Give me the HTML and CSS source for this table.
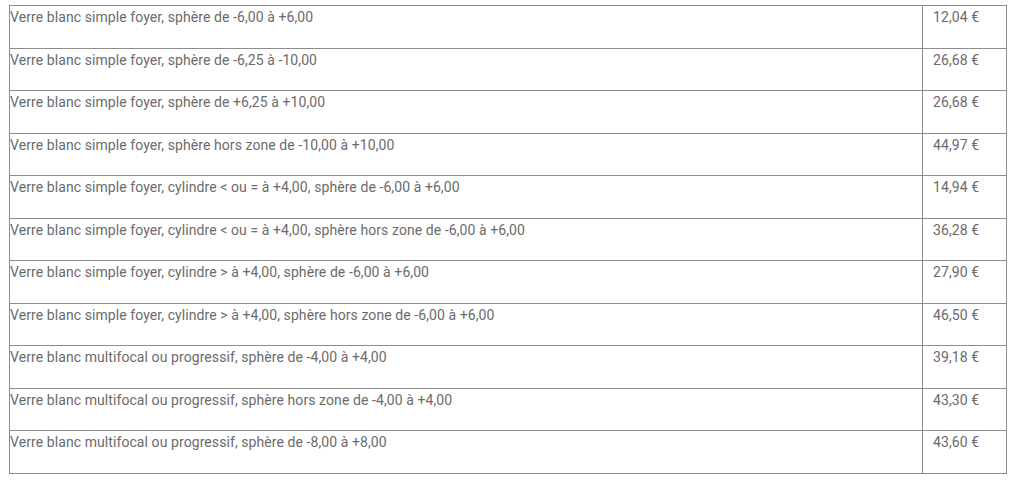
FILE: index.html
```html
<!DOCTYPE html>
<html lang="fr">
<head>
<meta charset="utf-8">
<link rel="stylesheet" href="styles.css">
</head>
<body>
<table class="tarifs">
  <tbody>
    <tr><td class="label">Verre blanc simple foyer, sphère de -6,00 à +6,00</td><td class="price">12,04 €</td></tr>
    <tr><td class="label">Verre blanc simple foyer, sphère de -6,25 à -10,00</td><td class="price">26,68 €</td></tr>
    <tr><td class="label">Verre blanc simple foyer, sphère de +6,25 à +10,00</td><td class="price">26,68 €</td></tr>
    <tr><td class="label">Verre blanc simple foyer, sphère hors zone de -10,00 à +10,00</td><td class="price">44,97 €</td></tr>
    <tr><td class="label">Verre blanc simple foyer, cylindre &lt; ou = à +4,00, sphère de -6,00 à +6,00</td><td class="price">14,94 €</td></tr>
    <tr><td class="label">Verre blanc simple foyer, cylindre &lt; ou = à +4,00, sphère hors zone de -6,00 à +6,00</td><td class="price">36,28 €</td></tr>
    <tr><td class="label">Verre blanc simple foyer, cylindre &gt; à +4,00, sphère de -6,00 à +6,00</td><td class="price">27,90 €</td></tr>
    <tr><td class="label">Verre blanc simple foyer, cylindre &gt; à +4,00, sphère hors zone de -6,00 à +6,00</td><td class="price">46,50 €</td></tr>
    <tr><td class="label">Verre blanc multifocal ou progressif, sphère de -4,00 à +4,00</td><td class="price">39,18 €</td></tr>
    <tr><td class="label">Verre blanc multifocal ou progressif, sphère hors zone de -4,00 à +4,00</td><td class="price">43,30 €</td></tr>
    <tr><td class="label">Verre blanc multifocal ou progressif, sphère de -8,00 à +8,00</td><td class="price">43,60 €</td></tr>
  </tbody>
</table>
</body>
</html>
```

FILE: styles.css
```css
html, body {
  margin: 0;
  padding: 0;
  background: #ffffff;
}

body {
  padding: 5px 0 0 9px;
  font-family: Roboto, "Liberation Sans", sans-serif;
  font-size: 14px;
  color: #6b6b6b;
}

.tarifs {
  border-collapse: collapse;
  width: 998px;
  table-layout: fixed;
}

.tarifs td {
  border: 1px solid #8c8c8c;
  vertical-align: top;
  height: 42.5px;
  padding: 3px 0 0 0;
  line-height: 17px;
  letter-spacing: 0.08px;
  box-sizing: border-box;
}

.tarifs td.label {
  width: 913px;
  padding-left: 0;
}

.tarifs td.price {
  padding-left: 10px;
}
```
